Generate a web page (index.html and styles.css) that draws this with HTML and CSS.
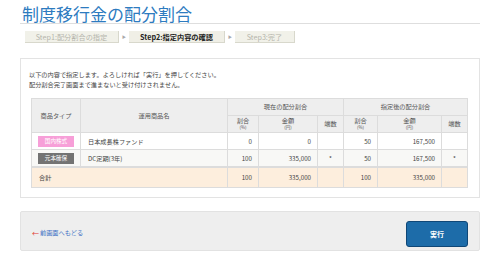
FILE: index.html
```html
<!DOCTYPE html>
<html lang="ja">
<head>
<meta charset="utf-8">
<title>制度移行金の配分割合</title>
<link rel="stylesheet" href="styles.css">
</head>
<body>
<div class="page">
  <h1 class="title">制度移行金の配分割合</h1>
  <ol class="steps">
    <li class="step">Step1:配分割合の指定</li>
    <li class="arrow">▶</li>
    <li class="step current">Step2:指定内容の確認</li>
    <li class="arrow">▶</li>
    <li class="step last">Step3:完了</li>
  </ol>

  <section class="card">
    <p class="intro">以下の内容で指定します。よろしければ「実行」を押してください。<br>配分割合完了画面まで進まないと受け付けされません。</p>
    <table class="alloc">
      <colgroup>
        <col class="c-type"><col class="c-name">
        <col class="c-pct"><col class="c-amt"><col class="c-frac">
        <col class="c-pct2"><col class="c-amt2"><col class="c-frac">
      </colgroup>
      <thead>
        <tr class="h1">
          <th rowspan="2">商品タイプ</th>
          <th rowspan="2">運用商品名</th>
          <th colspan="3">現在の配分割合</th>
          <th colspan="3">指定後の配分割合</th>
        </tr>
        <tr class="h2">
          <th><span class="top">割合</span><span class="sub">(%)</span></th>
          <th><span class="top">金額</span><span class="sub">(円)</span></th>
          <th>端数</th>
          <th><span class="top">割合</span><span class="sub">(%)</span></th>
          <th><span class="top">金額</span><span class="sub">(円)</span></th>
          <th>端数</th>
        </tr>
      </thead>
      <tbody>
        <tr class="row">
          <td class="type"><span class="badge pink">国内株式</span></td>
          <td class="name">日本成長株ファンド</td>
          <td class="num">0</td>
          <td class="num">0</td>
          <td class="frac"></td>
          <td class="num">50</td>
          <td class="num">167,500</td>
          <td class="frac"></td>
        </tr>
        <tr class="row alt">
          <td class="type"><span class="badge gray">元本確保</span></td>
          <td class="name">DC定期(3年)</td>
          <td class="num">100</td>
          <td class="num">335,000</td>
          <td class="frac">*</td>
          <td class="num">50</td>
          <td class="num">167,500</td>
          <td class="frac">*</td>
        </tr>
        <tr class="total">
          <td class="label" colspan="2">合計</td>
          <td class="num">100</td>
          <td class="num">335,000</td>
          <td class="frac"></td>
          <td class="num">100</td>
          <td class="num">335,000</td>
          <td class="frac"></td>
        </tr>
      </tbody>
    </table>
  </section>

  <div class="actions">
    <a class="back" href="#"><span class="larr">←</span>前画面へもどる</a>
    <button class="exec" type="button">実行</button>
  </div>
</div>
</body>
</html>
```

FILE: styles.css
```css
html, body {
  margin: 0;
  padding: 0;
  background: #fff;
}
body {
  font-family: "Noto Sans CJK JP", "Liberation Sans", sans-serif;
  color: #444;
}
.page {
  width: 460px;
  padding: 0 20px;
}
.title {
  margin: 0;
  padding: 4px 0 0 2px;
  height: 19px;
  font-size: 17px;
  line-height: 19px;
  font-weight: normal;
  color: #2d7bbf;
  border-bottom: 1px solid #dedede;
}
.steps {
  list-style: none;
  margin: 6px 0 0 5px;
  padding: 0;
  display: flex;
  align-items: center;
  height: 13px;
}
.step {
  height: 12px;
  line-height: 12px;
  font-size: 7.2px;
  padding: 0;
  background: #f1f1e9;
  color: #b5b5ac;
  border-right: 1px solid #d8d8cc;
  border-bottom: 1px solid #d8d8cc;
  box-sizing: border-box;
  text-align: center;
  white-space: nowrap;
}
.step:first-child { width: 94px; }
.step.current {
  width: 96px;
  color: #222;
  font-weight: bold;
  background: #f0efe6;
}
.step.last { width: 60px; }
.arrow {
  width: 10px;
  font-size: 4px;
  color: #aaa;
  text-align: center;
}
.card {
  margin-top: 15px;
  border: 1px solid #e3e3e3;
  padding: 11px 14px 9px 10px;
}
.intro {
  margin: 0 0 8px -2px;
  font-size: 6.2px;
  line-height: 10px;
  color: #444;
}
.alloc {
  border-collapse: collapse;
  width: 435px;
  table-layout: fixed;
  font-size: 6.2px;
  color: #444;
}
.c-type { width: 49px; }
.c-name { width: 147px; }
.c-pct { width: 31px; }
.c-amt { width: 59px; }
.c-frac { width: 26px; }
.c-pct2 { width: 34px; }
.c-amt2 { width: 64px; }
.alloc th, .alloc td {
  border: 1px solid #dcdcdc;
  padding: 0;
}
.alloc th {
  background: #eeeeee;
  font-weight: normal;
  color: #555;
  text-align: center;
  line-height: 8px;
}
.h1 th { height: 16px; }
.h2 th { height: 16px; }
.top {
  display: block;
  line-height: 9px;
  margin-top: -1px;
}
.sub {
  display: block;
  font-size: 4.4px;
  line-height: 6.5px;
  margin-top: -1px;
}
.row td {
  height: 16px;
  background: #fff;
}
.row.alt td { background: #f8f8f6; }
.type { text-align: center; }
.badge {
  display: inline-block;
  width: 36px;
  height: 11px;
  line-height: 11px;
  font-size: 5.6px;
  color: #fff;
  text-align: center;
  vertical-align: middle;
}
.badge.pink { background: #f79fd8; }
.badge.gray { background: #737373; }
.name { padding-left: 7px !important; }
.num {
  text-align: right;
  padding-right: 6px !important;
}
.frac { text-align: center; }
.total td {
  height: 19px;
  background: #fdeedd;
  border-top: 2px solid #dcdcdc;
}
.total .label { padding-left: 7px !important; }
.actions {
  margin-top: 13px;
  height: 40px;
  background: #eeeeee;
  border: 1px solid #e2e2e2;
  border-radius: 2px;
  box-sizing: border-box;
  display: flex;
  align-items: center;
  justify-content: space-between;
  padding: 0 11px 0 11px;
}
.back {
  font-size: 6.2px;
  color: #3a6fc4;
  text-decoration: none;
  display: flex;
  align-items: center;
  padding-top: 3px;
}
.larr {
  color: #e03a2f;
  font-size: 7px;
  margin-right: 1px;
}
.exec {
  width: 62px;
  height: 26px;
  margin-top: 5px;
  background: #1d6ca9;
  border: 1px solid #0f4777;
  border-radius: 3px;
  color: #fff;
  font-family: "Noto Sans CJK JP", sans-serif;
  font-size: 7px;
  font-weight: bold;
  padding: 0;
}
```
